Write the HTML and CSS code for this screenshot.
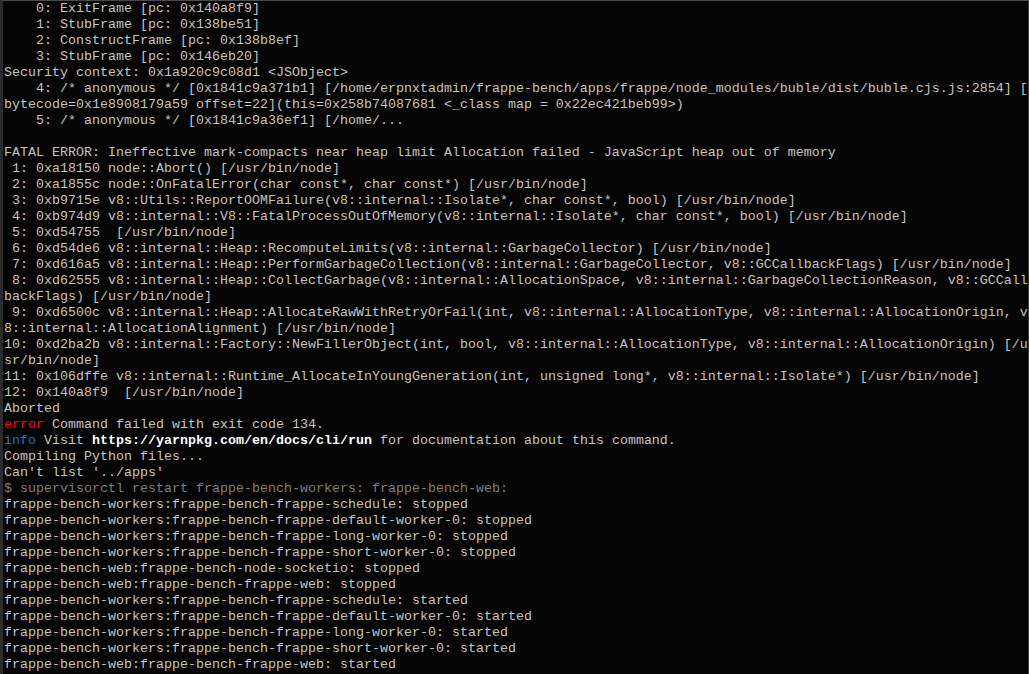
FILE: index.html
```html
<!DOCTYPE html>
<html>
<head>
<meta charset="utf-8">
<link rel="stylesheet" href="styles.css">
</head>
<body>
<div class="term">
<pre class="out">    0: ExitFrame [pc: 0x140a8f9]
    1: StubFrame [pc: 0x138be51]
    2: ConstructFrame [pc: 0x138b8ef]
    3: StubFrame [pc: 0x146eb20]
Security context: 0x1a920c9c08d1 &lt;JSObject&gt;
    4: /* anonymous */ [0x1841c9a371b1] [/home/erpnxtadmin/frappe-bench/apps/frappe/node_modules/buble/dist/buble.cjs.js:2854] [
bytecode=0x1e8908179a59 offset=22](this=0x258b74087681 &lt;_class map = 0x22ec421beb99&gt;)
    5: /* anonymous */ [0x1841c9a36ef1] [/home/...

FATAL ERROR: Ineffective mark-compacts near heap limit Allocation failed - JavaScript heap out of memory
 1: 0xa18150 node::Abort() [/usr/bin/node]
 2: 0xa1855c node::OnFatalError(char const*, char const*) [/usr/bin/node]
 3: 0xb9715e v8::Utils::ReportOOMFailure(v8::internal::Isolate*, char const*, bool) [/usr/bin/node]
 4: 0xb974d9 v8::internal::V8::FatalProcessOutOfMemory(v8::internal::Isolate*, char const*, bool) [/usr/bin/node]
 5: 0xd54755  [/usr/bin/node]
 6: 0xd54de6 v8::internal::Heap::RecomputeLimits(v8::internal::GarbageCollector) [/usr/bin/node]
 7: 0xd616a5 v8::internal::Heap::PerformGarbageCollection(v8::internal::GarbageCollector, v8::GCCallbackFlags) [/usr/bin/node]
 8: 0xd62555 v8::internal::Heap::CollectGarbage(v8::internal::AllocationSpace, v8::internal::GarbageCollectionReason, v8::GCCall
backFlags) [/usr/bin/node]
 9: 0xd6500c v8::internal::Heap::AllocateRawWithRetryOrFail(int, v8::internal::AllocationType, v8::internal::AllocationOrigin, v
8::internal::AllocationAlignment) [/usr/bin/node]
10: 0xd2ba2b v8::internal::Factory::NewFillerObject(int, bool, v8::internal::AllocationType, v8::internal::AllocationOrigin) [/u
sr/bin/node]
11: 0x106dffe v8::internal::Runtime_AllocateInYoungGeneration(int, unsigned long*, v8::internal::Isolate*) [/usr/bin/node]
12: 0x140a8f9  [/usr/bin/node]
Aborted
<span class="err">error</span> Command failed with exit code 134.
<span class="info">info</span> Visit <span class="link">https://yarnpkg.com/en/docs/cli/run</span> for documentation about this command.
Compiling Python files...
Can't list '../apps'
<span class="cmd">$ supervisorctl restart frappe-bench-workers: frappe-bench-web:</span>
frappe-bench-workers:frappe-bench-frappe-schedule: stopped
frappe-bench-workers:frappe-bench-frappe-default-worker-0: stopped
frappe-bench-workers:frappe-bench-frappe-long-worker-0: stopped
frappe-bench-workers:frappe-bench-frappe-short-worker-0: stopped
frappe-bench-web:frappe-bench-node-socketio: stopped
frappe-bench-web:frappe-bench-frappe-web: stopped
frappe-bench-workers:frappe-bench-frappe-schedule: started
frappe-bench-workers:frappe-bench-frappe-default-worker-0: started
frappe-bench-workers:frappe-bench-frappe-long-worker-0: started
frappe-bench-workers:frappe-bench-frappe-short-worker-0: started
frappe-bench-web:frappe-bench-frappe-web: started</pre>
</div>
</body>
</html>
```
FILE: styles.css
```css
html, body {
  margin: 0;
  padding: 0;
  background: #050505;
  height: 100%;
  overflow: hidden;
}

.term {
  box-sizing: border-box;
  height: 674px;
  width: 1029px;
  background: #050505;
  border-left: 3px solid #2c2c2c;
  border-top: 1px solid #4a4a4a;
  border-right: 1px solid #3a3a3a;
  padding-left: 1px;
  overflow: hidden;
}

.out {
  margin: 0;
  font-family: "Liberation Mono", "DejaVu Sans Mono", monospace;
  font-size: 13.33px;
  line-height: 16px;
  color: #c4c4c4;
  white-space: pre;
}

.err {
  color: #f01010;
}

.info {
  color: #1f6fd6;
}

.link {
  color: #ffffff;
  font-weight: bold;
}

.cmd {
  color: #7f7f7f;
}
```
